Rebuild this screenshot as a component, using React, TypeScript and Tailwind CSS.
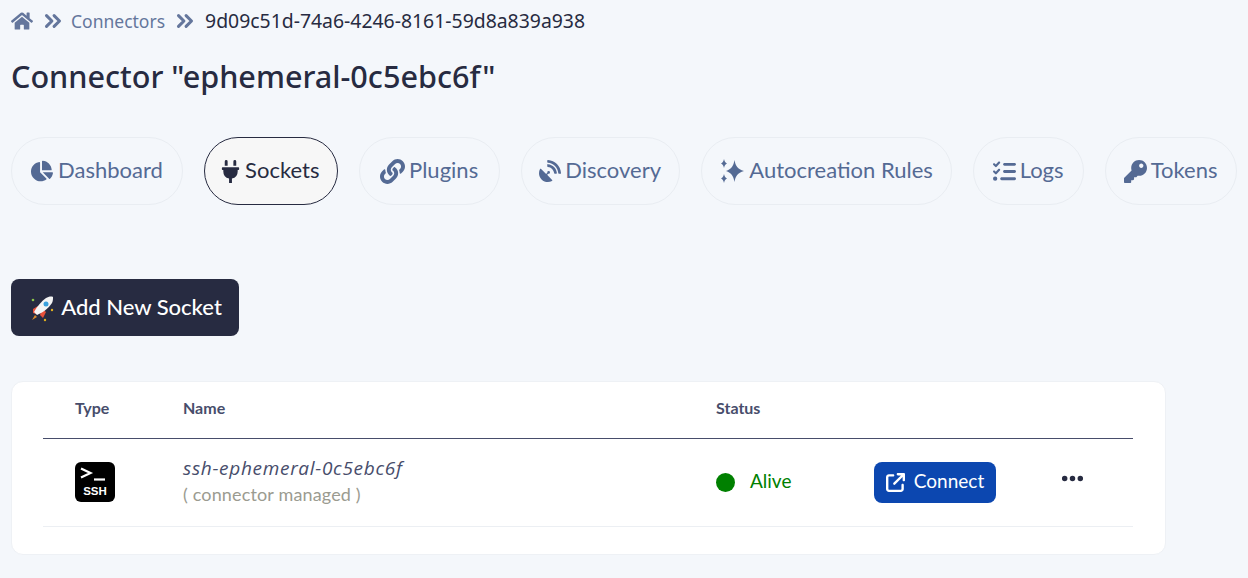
import { FaHome, FaChartPie, FaPlug, FaLink, FaSatelliteDish, FaKey } from 'react-icons/fa'
import { FaListCheck, FaEllipsis, FaArrowUpRightFromSquare } from 'react-icons/fa6'
import { ChevronsRight } from 'lucide-react'

const tabs = [
  { name: 'Dashboard', icon: <FaChartPie size={22} className="mr-[1px]" />, width: 'w-[172px]' },
  { name: 'Sockets', icon: <FaPlug size={23} className="-ml-[3px] -mr-[1px]" />, width: 'w-[133.6px]', active: true },
  { name: 'Plugins', icon: <FaLink size={25} />, width: 'w-[141px]' },
  { name: 'Discovery', icon: <FaSatelliteDish size={22} />, width: 'w-[159px]' },
  { name: 'Autocreation Rules', icon: <Sparkles />, width: 'w-[251px]' },
  { name: 'Logs', icon: <FaListCheck size={23} />, width: 'w-[111px]' },
  { name: 'Tokens', icon: <FaKey size={23} />, width: 'w-[132px]' },
]

function Sparkles() {
  return (
    <svg width="26" height="26" viewBox="0 0 26 26" fill="currentColor">
      <path d="M15.500 2c1 6 3 9 9.500 11-6.500 2-8.500 5-9.500 11-1-6-3-9-8.500-11 5.500-2 7.500-5 8.500-11z" />
      <path d="M5 1c.5 2.500 1.200 3.500 3 4.500-1.800 1-2.500 2-3 4.500-.5-2.500-1.200-3.500-3-4.500 1.800-1 2.500-2 3-4.500z" />
      <path d="M5 16c.5 2.500 1.200 3.500 3 4.500-1.800 1-2.500 2-3 4.500-.5-2.500-1.200-3.500-3-4.500 1.800-1 2.500-2 3-4.500z" />
    </svg>
  )
}

function Rocket() {
  return (
    <svg width="28" height="28" viewBox="0 0 28 28">
      <path d="M5 15l5-3-2 8-3-1z" fill="#e8503a" />
      <path d="M18 18l-3 6-3-3 2-6z" fill="#e8503a" />
      <path d="M9 21c5-2 12-7 15-12 1-2 1-4 1-6-2-1-5 0-7 1-4 3-9 8-12 14z" fill="#f4f4f4" />
      <circle cx="18" cy="10" r="2.500" fill="#3aa0dc" />
      <path d="M7 21l2 2-5 3z" fill="#d98a2b" />
      <circle cx="5" cy="6" r="1.300" fill="#8bc34a" />
      <circle cx="24" cy="16" r="1.200" fill="#e0b020" />
      <circle cx="17" cy="26" r="1.200" fill="#e0b020" />
    </svg>
  )
}

function SshIcon() {
  return (
    <div className="w-10 h-10 -mt-[1px] rounded-md bg-black text-white flex flex-col justify-between px-[5px] pt-[5px] pb-[6px] font-['Liberation_Sans',sans-serif] font-bold">
      <svg width="26" height="14" viewBox="0 0 26 14" fill="none" stroke="currentColor" strokeWidth="2.200">
        <path d="M1 1.500l9.500 4.500-9.500 4.500" />
        <path d="M14 12.500h11" />
      </svg>
      <span className="text-[11.5px] leading-[10px] text-center">SSH</span>
    </div>
  )
}

export default function App() {
  return (
    <div className="w-[1248px] h-[578px] overflow-hidden bg-[#f4f7fb] px-[11px] font-['Noto_Sans',sans-serif]">
      {/* Breadcrumb */}
      <div className="h-[42px] flex items-center text-[17.5px] text-[#64769c]">
        <FaHome size={22} />
        <ChevronsRight size={26} strokeWidth={2.8} className="ml-[7px]" />
        <span className="ml-[5px]">Connectors</span>
        <ChevronsRight size={26} strokeWidth={2.8} className="ml-[7px]" />
        <span className="ml-[7px] text-[19.4px] text-[#272b41]">9d09c51d-74a6-4246-8161-59d8a839a938</span>
      </div>

      <h1 className="mt-[14px] h-[42px] flex items-center text-[30.6px] font-medium text-[#272b41]">
        Connector "ephemeral-0c5ebc6f"
      </h1>

      {/* Tabs */}
      <nav className="mt-[39px] flex gap-[21px] font-['Lato',sans-serif] text-[22px]">
        {tabs.map((tab) => (
          <a
            key={tab.name}
            className={`h-[68px] ${tab.width} rounded-[34px] border flex items-center justify-center gap-[4px] ${
              tab.active
                ? 'border-[#272b41] bg-[#f7f7f7] text-[#272b41]'
                : 'border-[#e9edf2] text-[#546a94]'
            }`}
          >
            {tab.icon}
            <span className="-mt-[4px]">{tab.name}</span>
          </a>
        ))}
      </nav>

      <button className="mt-[74px] w-[228px] h-[57px] rounded-lg bg-[#272b41] text-white flex items-center justify-center gap-[5px] font-['Lato',sans-serif] text-[22px] font-medium">
        <Rocket />
        <span className="-mt-[3px]">Add New Socket</span>
      </button>

      {/* Sockets table */}
      <div className="mt-[45px] w-[1155px] h-[174px] rounded-xl bg-white border border-[#eef1f5] pl-[31px] pr-[32px] font-['Lato',sans-serif]">
        <div className="h-[57px] border-b border-[#474d6b] grid grid-cols-[108px_533px_1fr] items-center pl-8 pb-[4px] text-[16px] font-bold text-[#474d6b]">
          <span>Type</span>
          <span>Name</span>
          <span>Status</span>
        </div>
        <div className="h-[88px] border-b border-[#eceff3] grid grid-cols-[108px_533px_158px_186px_1fr] items-center pl-8">
          <SshIcon />
          <div className="pb-[3px]">
            <div className="font-['Open_Sans',sans-serif] text-[19px] italic tracking-[0.7px] text-[#474d6b] leading-[26px]">ssh-ephemeral-0c5ebc6f</div>
            <div className="text-[18px] tracking-[0.15px] text-[#9b9b90] leading-[26px]">( connector managed )</div>
          </div>
          <div className="flex items-center gap-[15px] text-[19px] text-[#008000]">
            <span className="w-[19px] h-[19px] rounded-full bg-[#008000]" />
            <span className="-mt-[2px]">Alive</span>
          </div>
          <button className="w-[122px] h-[41px] rounded-lg bg-[#0c47b0] text-white text-[19px] flex items-center justify-center gap-[9px]">
            <FaArrowUpRightFromSquare size={19} />
            <span className="-mt-[2px]">Connect</span>
          </button>
          <FaEllipsis size={25} className="text-[#272b41] -mt-[8px]" />
        </div>
      </div>
    </div>
  )
}
